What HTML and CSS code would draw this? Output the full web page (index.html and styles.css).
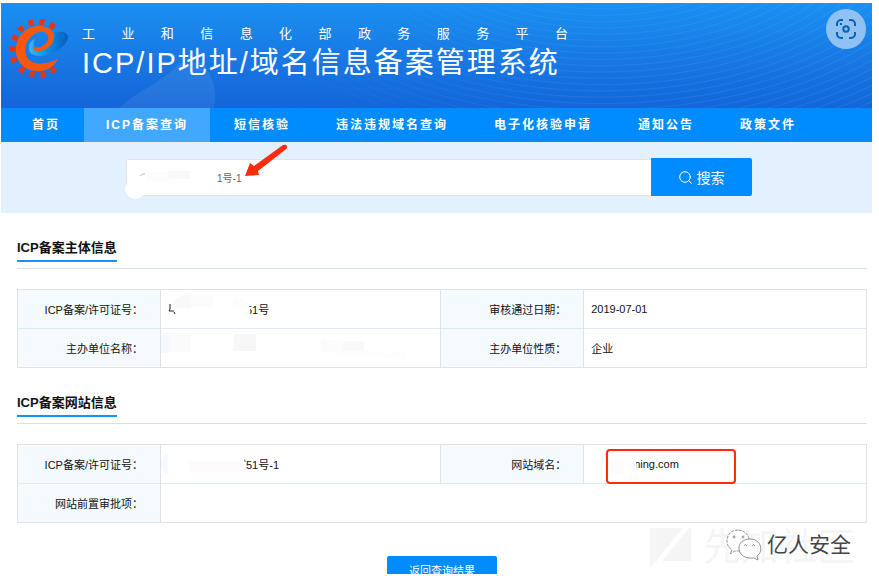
FILE: index.html
```html
<!DOCTYPE html>
<html lang="zh-CN">
<head>
<meta charset="utf-8">
<title>ICP/IP地址/域名信息备案管理系统</title>
<link rel="stylesheet" href="styles.css">
</head>
<body>
<div class="page">
  <header class="banner">
    <svg class="banner-shape" width="120" height="45" viewBox="0 0 120 45" aria-hidden="true"><path d="M18 45C35 28 62 20 78 0h24c10 14 15 30 11 45z" fill="#fff" opacity=".07"/></svg>
    <svg class="logo" width="60" height="62" viewBox="0 0 60 62" aria-hidden="true">
      <defs>
        <linearGradient id="swoosh" x1="0" y1="0" x2="1" y2="0"><stop offset="0" stop-color="#35b8f7"/><stop offset=".5" stop-color="#0b8ae0"/><stop offset="1" stop-color="#0660bd"/></linearGradient>
        <path id="tooth" d="M-3-3h6l-1 6h-4z"/>
      </defs>
      <g fill="#ea3410">
        <use href="#tooth" transform="translate(22 4) rotate(-15)"/>
        <use href="#tooth" transform="translate(33 3) rotate(8)"/>
        <use href="#tooth" transform="translate(43 7) rotate(32)"/>
        <use href="#tooth" transform="translate(12 10) rotate(-40)"/>
        <use href="#tooth" transform="translate(6 19) rotate(-65)"/>
        <use href="#tooth" transform="translate(3 30) rotate(-90)"/>
        <use href="#tooth" transform="translate(5 41) rotate(-115)"/>
        <use href="#tooth" transform="translate(13 51) rotate(-142)"/>
        <use href="#tooth" transform="translate(23 55) rotate(-168)"/>
        <use href="#tooth" transform="translate(34 56) rotate(170)"/>
        <use href="#tooth" transform="translate(44 51) rotate(145)"/>
      </g>
      <path d="M46 13c7-1 13 0 13 5 0 8-14 19-28 19-8 0-12-4-11-9 0-4 3-7 6-8-3 5-1 11 6 10 9-1 16-8 14-17z" fill="url(#swoosh)"/>
      <path d="M49 40C45 48 37 53 27 52 14 51 6 41 7 29 8 16 18 7 30 7c9 0 16 5 15 12-1 8-9 13-16 13-4 0-6-2-5-5 2 2 6 2 9 0 6-3 8-8 5-12-3-3-9-3-14 1-7 5-9 13-7 20 3 9 15 12 32 4z" fill="#fb5706"/>
    </svg>
    <div class="banner-text">
      <p class="ministry">工业和信息化部政务服务平台</p>
      <h1 class="title">ICP/IP地址/域名信息备案管理系统</h1>
    </div>
    <button class="scan" type="button" aria-label="扫描">
      <svg width="22" height="22" viewBox="0 0 22 22" fill="none" stroke="#0b5fb5" stroke-width="2"><path d="M2 8V6a4 4 0 0 1 4-4h2M14 2h2a4 4 0 0 1 4 4v2M20 14v2a4 4 0 0 1-4 4h-2M8 20H6a4 4 0 0 1-4-4v-2"/><circle cx="11" cy="11" r="2.700"/><path d="M5 6h2"/></svg>
    </button>
  </header>

  <nav class="nav">
    <a href="#">首页</a>
    <a href="#" class="active">ICP备案查询</a>
    <a href="#">短信核验</a>
    <a href="#">违法违规域名查询</a>
    <a href="#">电子化核验申请</a>
    <a href="#">通知公告</a>
    <a href="#">政策文件</a>
  </nav>

  <form class="search" onsubmit="return false">
    <input class="search-input" type="text" value="1号-1" aria-label="搜索内容">
    <button class="search-button" type="submit">
      <svg width="13" height="13" viewBox="0 0 13 13" fill="none" stroke="#fff" stroke-linecap="round"><circle cx="6" cy="6" r="5.300"/><path d="M10 10l2.300 2.300"/></svg>
      搜索
    </button>
    <svg class="search-marks" width="170" height="58" viewBox="0 0 170 58" aria-hidden="true">
      <circle cx="12" cy="46" r="10" fill="#fff"/>
      <path d="M17 33l3-2h2" fill="none" stroke="#bbb"/>
      <path d="M24 29h24v9H24z" fill="#fcfcfc"/><path d="M45 28h22v8H45z" fill="#f9f9f9"/>
      <path d="M122 33L127 20l4 3 29-21q3-1 4 1t-2 4L135 28l1 4z" fill="#ff2b0d"/>
    </svg>
  </form>

  <main class="content">
    <section>
      <div class="heading"><h2>ICP备案主体信息</h2></div>
      <table class="info">
        <colgroup><col class="label-col"><col class="value-col"><col class="label-col"><col></colgroup>
        <tr>
          <th scope="row">ICP备案/许可证号：</th>
          <td class="masked"><span class="partial">51号</span>
            <svg class="mask" width="100" height="28" viewBox="0 0 100 28" aria-hidden="true"><path d="M9 12v5l-1 2h5M13 20l1 2" fill="none" stroke="#222"/><path d="M12 9q4-6 18-6v13H14z" fill="#f9f9f9"/><path d="M30 4h22v11H30z" fill="#fcfcfc"/><path d="M72 4q14 2 17 12v8h-5v-8H72z" fill="#fcfcfc"/></svg>
          </td>
          <th scope="row">审核通过日期：</th>
          <td>2019-07-01</td>
        </tr>
        <tr>
          <th scope="row">主办单位名称：</th>
          <td class="masked">
            <svg class="mask" width="250" height="28" viewBox="0 0 250 28" aria-hidden="true"><path d="M0 2h8v20H0z" fill="#f5f9ff"/><path d="M8 2h22v19H8z" fill="#fbfbfb"/><path d="M73 3h22v17H73z" fill="#f7f7f7"/><path d="M160 8l22 2v10h-22z" fill="#fcfcfc"/><path d="M182 10h21v10h-21z" fill="#f9f9f9"/><path d="M130 20h115v8z" fill="#fdfdfd"/></svg>
          </td>
          <th scope="row">主办单位性质：</th>
          <td>企业</td>
        </tr>
      </table>
    </section>

    <section>
      <div class="heading"><h2>ICP备案网站信息</h2></div>
      <table class="info">
        <colgroup><col class="label-col"><col class="value-col"><col class="label-col"><col></colgroup>
        <tr>
          <th scope="row">ICP备案/许可证号：</th>
          <td class="masked"><span class="partial">51号-1</span>
            <svg class="mask" width="100" height="28" viewBox="0 0 100 28" aria-hidden="true"><path d="M0 11l7-4v20l-7-4z" fill="#f6f8ff"/><path d="M28 14h50l5 4-6 7H28z" fill="#fdfbfc"/><path d="M83 13h1v2" fill="none" stroke="#777"/></svg>
          </td>
          <th scope="row">网站域名：</th>
          <td class="masked"><span class="domain">ning.com</span><span class="highlight"></span>
            <svg class="mask" width="60" height="28" viewBox="0 0 60 28" aria-hidden="true"><path d="M0 10h8v16H0z" fill="#fff"/><path d="M25 13h15v15H25z" fill="#fcfcfc"/><path d="M49 10h3v14h-3z" fill="#fff"/></svg>
          </td>
        </tr>
        <tr>
          <th scope="row">网站前置审批项：</th>
          <td colspan="3"></td>
        </tr>
      </table>
    </section>
    <button class="back" type="button">返回查询结果</button>
  </main>

  <div class="watermark">
    <svg width="42" height="42" viewBox="0 0 42 42" aria-hidden="true"><path d="M0 2h33L0 42zM41 0v35H12z" fill="#f5f5f5"/></svg>
    <span class="community">先知社区</span>
    <div class="account">
      <svg width="36" height="32" viewBox="0 0 36 32" fill="#fff" stroke="#777" stroke-width=".8" aria-hidden="true"><path d="M12 1C5 1 1 6 1 12c0 4 2 7 5 9l-2 4 5-3h5c12-1 13-20-2-21z" stroke-dasharray="3 1"/><path d="M24 10c-7 0-11 4-11 9s4 10 11 10h4l4 2-1-4c7-5 4-17-7-17z"/><circle cx="8" cy="8" r="1"/><circle cx="17" cy="8" r="1"/><path d="M18 17q1-3 3 0M26 17q1-3 3 0"/></svg>
      <span>亿人安全</span>
    </div>
  </div>
</div>
</body>
</html>
```
FILE: styles.css
```css
* { box-sizing: border-box; }

body {
  display: flex;
  height: 100vh;
  margin: 0;
  padding: 3px 7px 8px 1px;
  background: #fff;
  color: #222;
  font-family: "Liberation Sans", "Noto Sans CJK SC", sans-serif;
  font-size: 11px;
}

.page {
  position: relative;
  flex: 1;
  overflow: hidden;
}

button, input { font-family: inherit; }

h1, h2, p { margin: 0; font-weight: 400; }

/* Banner */
.banner {
  position: relative;
  display: flex;
  align-items: flex-start;
  padding: 6px 6px 26px 8px;
  background: linear-gradient(#1a90f1, #1877e3 55%, #1465d8);
  color: #fff;
}

.banner::before {
  content: "";
  position: absolute;
  inset: 0;
  background: repeating-radial-gradient(370px 210px at 69% -100px, transparent 0, transparent 2%, rgba(70, 190, 255, .16) 2.400%, transparent 3%);
  -webkit-mask-image: linear-gradient(90deg, transparent 30%, #000 65%);
  mask-image: linear-gradient(90deg, transparent 30%, #000 65%);
}

.banner-shape { position: absolute; left: 100px; bottom: 0; }

.logo { position: relative; flex: none; margin-top: 10px; }

.banner-text { position: relative; margin: 14px auto 0 13px; }

.ministry {
  width: 486px;
  font-size: 13px;
  line-height: 22px;
  text-align: justify;
  text-align-last: justify;
}

.title {
  font-size: 29px;
  line-height: 37px;
  letter-spacing: 2px;
  white-space: nowrap;
}

.scan {
  position: relative;
  display: grid;
  place-items: center;
  width: 40px;
  height: 40px;
  padding: 0;
  border: 0;
  border-radius: 50%;
  background: #8fc1f3;
}

/* Navigation */
.nav {
  display: flex;
  gap: 2px;
  padding-left: 9px;
  background: #008cff;
}

.nav a {
  padding: 0 22px;
  color: #fff;
  font-size: 12px;
  font-weight: 700;
  line-height: 34px;
  letter-spacing: 2px;
  text-decoration: none;
  white-space: nowrap;
}

.nav .active { background: #40a9ff; }

/* Search */
.search {
  position: relative;
  display: flex;
  align-items: center;
  padding: 16px 120px 17px 125px;
  background: #e3f1ff;
}

.search-input {
  flex: 1;
  min-width: 0;
  height: 37px;
  padding: 0 0 0 90px;
  border: 1px solid #e2e5e8;
  border-right: 0;
  border-radius: 2px 0 0 2px;
  background: #fff;
  color: #666;
  font-size: 10px;
}

.search-button {
  display: flex;
  align-items: center;
  justify-content: center;
  gap: 5px;
  width: 101px;
  height: 38px;
  padding: 0;
  border: 0;
  border-radius: 0 2px 2px 0;
  background: #008cff;
  color: #fff;
  font-size: 14px;
}

.search-marks { position: absolute; left: 122px; top: 1px; }

/* Record tables */
.content { padding: 0 5px 0 16px; }

.heading {
  display: flex;
  margin-bottom: 20px;
  padding: 26px 0 6px;
  border-bottom: 1px solid #cfe2ee;
}

.heading h2 {
  padding-bottom: 3px;
  border-bottom: 2px solid #1890ff;
  color: #111;
  font-size: 13px;
  font-weight: 700;
  line-height: 18px;
}

.info {
  width: 100%;
  border: 1px solid #e0e2e4;
  border-collapse: collapse;
  table-layout: fixed;
}

.label-col { width: 143px; }
.value-col { width: 33%; }

.info th, .info td {
  height: 39px;
  padding: 0 7px;
  border-right: 1px solid #e0e2e4;
  color: #111;
  font-weight: 400;
  text-align: left;
}

.info th {
  padding-right: 17px;
  background: #f5faff;
  text-align: right;
}

.info tr + tr { border-top: 1px solid #dcebf5; }

.info .masked { position: relative; }

.mask { position: absolute; left: 0; top: 2px; }

.partial { margin-left: 78px; }
.domain { margin-left: 43px; }

.highlight {
  position: absolute;
  left: 22px;
  top: 4px;
  width: 130px;
  height: 35px;
  border: 2px solid #ff2b0d;
  border-radius: 4px;
}

.back {
  display: block;
  width: 110px;
  height: 27px;
  margin: 33px auto 0;
  padding: 0;
  border: 0;
  border-radius: 2px;
  background: #008cff;
  color: #fff;
  font-size: 11px;
}

/* Watermark */
.watermark {
  position: absolute;
  right: 17px;
  bottom: 3px;
  display: flex;
  align-items: center;
  gap: 11px;
  color: #f5f5f5;
}

.community { font-size: 38px; line-height: 48px; }

.account {
  position: absolute;
  right: 4px;
  top: 6px;
  display: flex;
  align-items: center;
  gap: 5px;
  color: #444;
  font-size: 21px;
  line-height: 32px;
  text-shadow: -1px -1px 0 #fff;
}
```
